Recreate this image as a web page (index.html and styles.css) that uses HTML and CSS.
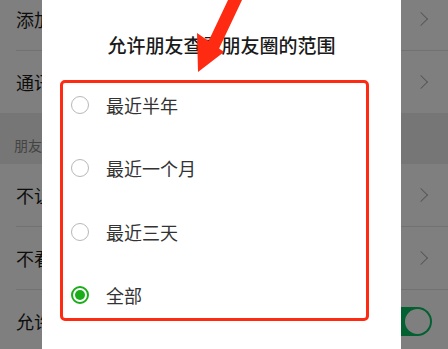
FILE: index.html
```html
<!DOCTYPE html>
<html lang="zh-CN">
<head>
    <meta charset="UTF-8">
    <meta name="viewport" content="width=device-width, initial-scale=1.0">
    <title>朋友权限</title>
    <link rel="stylesheet" href="styles.css">
</head>
<body>
    <!-- page behind the dialog -->
    <div class="page">
        <div class="group">
            <div class="row">
                <span class="label">添加我的方式</span>
                <span class="chevron"></span>
            </div>
            <div class="row">
                <span class="label">通讯录黑名单</span>
                <span class="chevron"></span>
            </div>
        </div>

        <div class="section-title">朋友圈</div>

        <div class="group">
            <div class="row">
                <span class="label">不让他（她）看</span>
                <span class="chevron"></span>
            </div>
            <div class="row">
                <span class="label">不看他（她）</span>
                <span class="chevron"></span>
            </div>
            <div class="row">
                <span class="label">允许陌生人查看十条朋友圈</span>
                <span class="switch"><span class="knob"></span></span>
            </div>
        </div>
    </div>

    <div class="mask"></div>

    <!-- dialog -->
    <div class="dialog">
        <h2 class="dialog-title">允许朋友查看朋友圈的范围</h2>
        <div class="options">
            <div class="option">
                <span class="radio"></span>
                <span class="option-text">最近半年</span>
            </div>
            <div class="option">
                <span class="radio"></span>
                <span class="option-text">最近一个月</span>
            </div>
            <div class="option">
                <span class="radio"></span>
                <span class="option-text">最近三天</span>
            </div>
            <div class="option">
                <span class="radio checked"></span>
                <span class="option-text">全部</span>
            </div>
        </div>
    </div>

    <!-- annotations -->
    <div class="highlight"></div>
    <svg class="arrow" width="448" height="80" viewBox="0 0 448 80">
        <polygon points="229.9,-4 208.6,41.1 197,33 198,72 224,52 219.1,48.5 243.9,-4" fill="#ff2a12"/>
    </svg>
</body>
</html>
```

FILE: styles.css
```css
html {
    overflow: hidden;
}

body {
    margin: 0;
    width: 448px;
    height: 349px;
    overflow: hidden;
    position: relative;
    font-family: "Noto Sans CJK SC", "Noto Sans", sans-serif;
    background-color: #ffffff;
}

.page {
    height: 361px;
    margin-top: -12px;
    overflow: hidden;
}

.group {
    background-color: #fff;
}

.row {
    height: 62px;
    display: flex;
    align-items: center;
    justify-content: space-between;
    padding: 0 18px 0 16px;
    position: relative;
}

.row + .row::before {
    content: "";
    position: absolute;
    top: -1px;
    left: 16px;
    right: 0;
    height: 1px;
    background-color: #e5e5e5;
}

.row + .row {
    margin-top: 1px;
}

.label {
    font-size: 18px;
    color: #1a1a1a;
}

.chevron {
    width: 9px;
    height: 9px;
    border-top: 1.5px solid #b2b2b2;
    border-right: 1.5px solid #b2b2b2;
    transform: rotate(45deg);
    margin-right: 4px;
}

.section-title {
    height: 51px;
    box-sizing: border-box;
    padding: 22px 0 0 14px;
    font-size: 14px;
    color: #888;
    background-color: #ededed;
}

.switch {
    width: 52px;
    height: 29px;
    border-radius: 15px;
    background-color: #07c160;
    display: flex;
    align-items: center;
    justify-content: flex-end;
    padding-right: 2px;
    box-sizing: border-box;
    margin-right: -2px;
}

.knob {
    width: 25px;
    height: 25px;
    border-radius: 50%;
    background-color: #fff;
}

.mask {
    position: absolute;
    inset: 0;
    background-color: rgba(0, 0, 0, 0.5);
}

.dialog {
    position: absolute;
    left: 42px;
    top: -20px;
    bottom: 0;
    width: 359px;
    background-color: #fff;
}

.dialog-title {
    margin: 53px 0 0;
    font-size: 19px;
    line-height: 24px;
    font-weight: 500;
    color: #1a1a1a;
    text-align: center;
}

.options {
    margin-top: 16px;
}

.option {
    height: 63.5px;
    display: flex;
    align-items: center;
    padding-left: 29px;
}

.radio {
    width: 18px;
    height: 18px;
    box-sizing: border-box;
    border: 1.5px solid #b8b8b8;
    border-radius: 50%;
    margin-right: 17px;
    flex-shrink: 0;
}

.radio.checked {
    border: 2px solid #1aad19;
    position: relative;
}

.radio.checked::after {
    content: "";
    position: absolute;
    left: 2px;
    top: 2px;
    width: 10px;
    height: 10px;
    border-radius: 50%;
    background-color: #1aad19;
}

.option-text {
    font-size: 18px;
    color: #333;
}

.highlight {
    position: absolute;
    left: 60px;
    top: 80px;
    width: 309px;
    height: 241px;
    box-sizing: border-box;
    border: 3px solid #ff2a12;
    border-radius: 5px;
}

.arrow {
    position: absolute;
    left: 0;
    top: 0;
}
```
